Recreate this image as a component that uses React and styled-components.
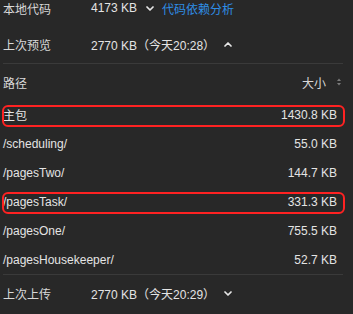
import React from 'react';
import styled, {createGlobalStyle} from 'styled-components';

const GlobalStyle = createGlobalStyle`
  body {
    margin: 0;
    background: #282828;
    font-family: "Liberation Sans", "Noto Sans CJK SC", sans-serif;
    font-size: 12px;
    color: #e0e0e0;
  }
`;

const Panel = styled.div`
  padding: 0 10px 0 3px;
  width: 353px;
  height: 314px;
  box-sizing: border-box;
  overflow: hidden;
`;

const InfoList = styled.div`
  display: flex;
  flex-direction: column;
  gap: 20px;
  margin-top: ${props => props.$offset || 0}px;
`;

const InfoRow = styled.div`
  display: flex;
  align-items: center;
  height: 16px;
  white-space: nowrap;
`;

const Label = styled.span`
  width: 88px;
  color: #d8d8d8;
`;

const Value = styled.span`
  color: #e4e4e4;
`;

const Link = styled.a`
  color: #2f8ee6;
  margin-left: 8px;
  cursor: pointer;
`;

const Divider = styled.div`
  height: 1px;
  background: #3a3a3a;
  margin-top: ${props => props.$offset || 0}px;
`;

const TableHead = styled.div`
  display: flex;
  justify-content: space-between;
  align-items: center;
  height: 36px;
  color: #d8d8d8;
`;

const SortButton = styled.span`
  display: flex;
  align-items: center;
  gap: 10px;
  margin-right: 1px;
`;

const Row = styled.div`
  position: relative;
  display: flex;
  justify-content: space-between;
  align-items: center;
  height: 29px;
  padding-right: 6px;
  color: #e4e4e4;

  ${props => props.$marked && `
    &::after {
      content: '';
      position: absolute;
      top: 5px;
      bottom: 2px;
      left: -1px;
      right: -2px;
      border: 2px solid #ff2222;
      border-radius: 6px;
      pointer-events: none;
    }
  `}
`;

const Chevron = ({up}) => (
  <svg width="8" height="5" viewBox="0 0 8 5" style={{marginLeft: 9}}>
    <polyline
      points={up ? '1,4 4,1 7,4' : '1,1 4,4 7,1'}
      fill="none"
      stroke="#e6e6e6"
      strokeWidth="1.7"
      strokeLinecap="round"
      strokeLinejoin="round"
    />
  </svg>
);

const SortIcon = () => (
  <svg width="6" height="10" viewBox="0 0 6 10">
    <polygon points="1,4 3,1.5 5,4" fill="#7c7c7c" />
    <polygon points="1,6 3,8.5 5,6" fill="#7c7c7c" />
  </svg>
);

const packages = [
  {path: '主包', size: '1430.8 KB', marked: true},
  {path: '/scheduling/', size: '55.0 KB'},
  {path: '/pagesTwo/', size: '144.7 KB'},
  {path: '/pagesTask/', size: '331.3 KB', marked: true},
  {path: '/pagesOne/', size: '755.5 KB'},
  {path: '/pagesHousekeeper/', size: '52.7 KB'},
];

export default function App() {
  return (
    <Panel>
      <GlobalStyle />
      <InfoList>
        <InfoRow>
          <Label>本地代码</Label>
          <Value>4173 KB</Value>
          <Chevron />
          <Link>代码依赖分析</Link>
        </InfoRow>
        <InfoRow>
          <Label>上次预览</Label>
          <Value>2770 KB（今天20:28）</Value>
          <Chevron up />
        </InfoRow>
      </InfoList>
      <Divider $offset={11} />
      <TableHead>
        <span>路径</span>
        <SortButton>
          大小
          <SortIcon />
        </SortButton>
      </TableHead>
      {packages.map(p => (
        <Row key={p.path} $marked={p.marked}>
          <span>{p.path}</span>
          <span>{p.size}</span>
        </Row>
      ))}
      <Divider />
      <InfoList $offset={10}>
        <InfoRow>
          <Label>上次上传</Label>
          <Value>2770 KB（今天20:29）</Value>
          <Chevron />
        </InfoRow>
      </InfoList>
    </Panel>
  );
}
